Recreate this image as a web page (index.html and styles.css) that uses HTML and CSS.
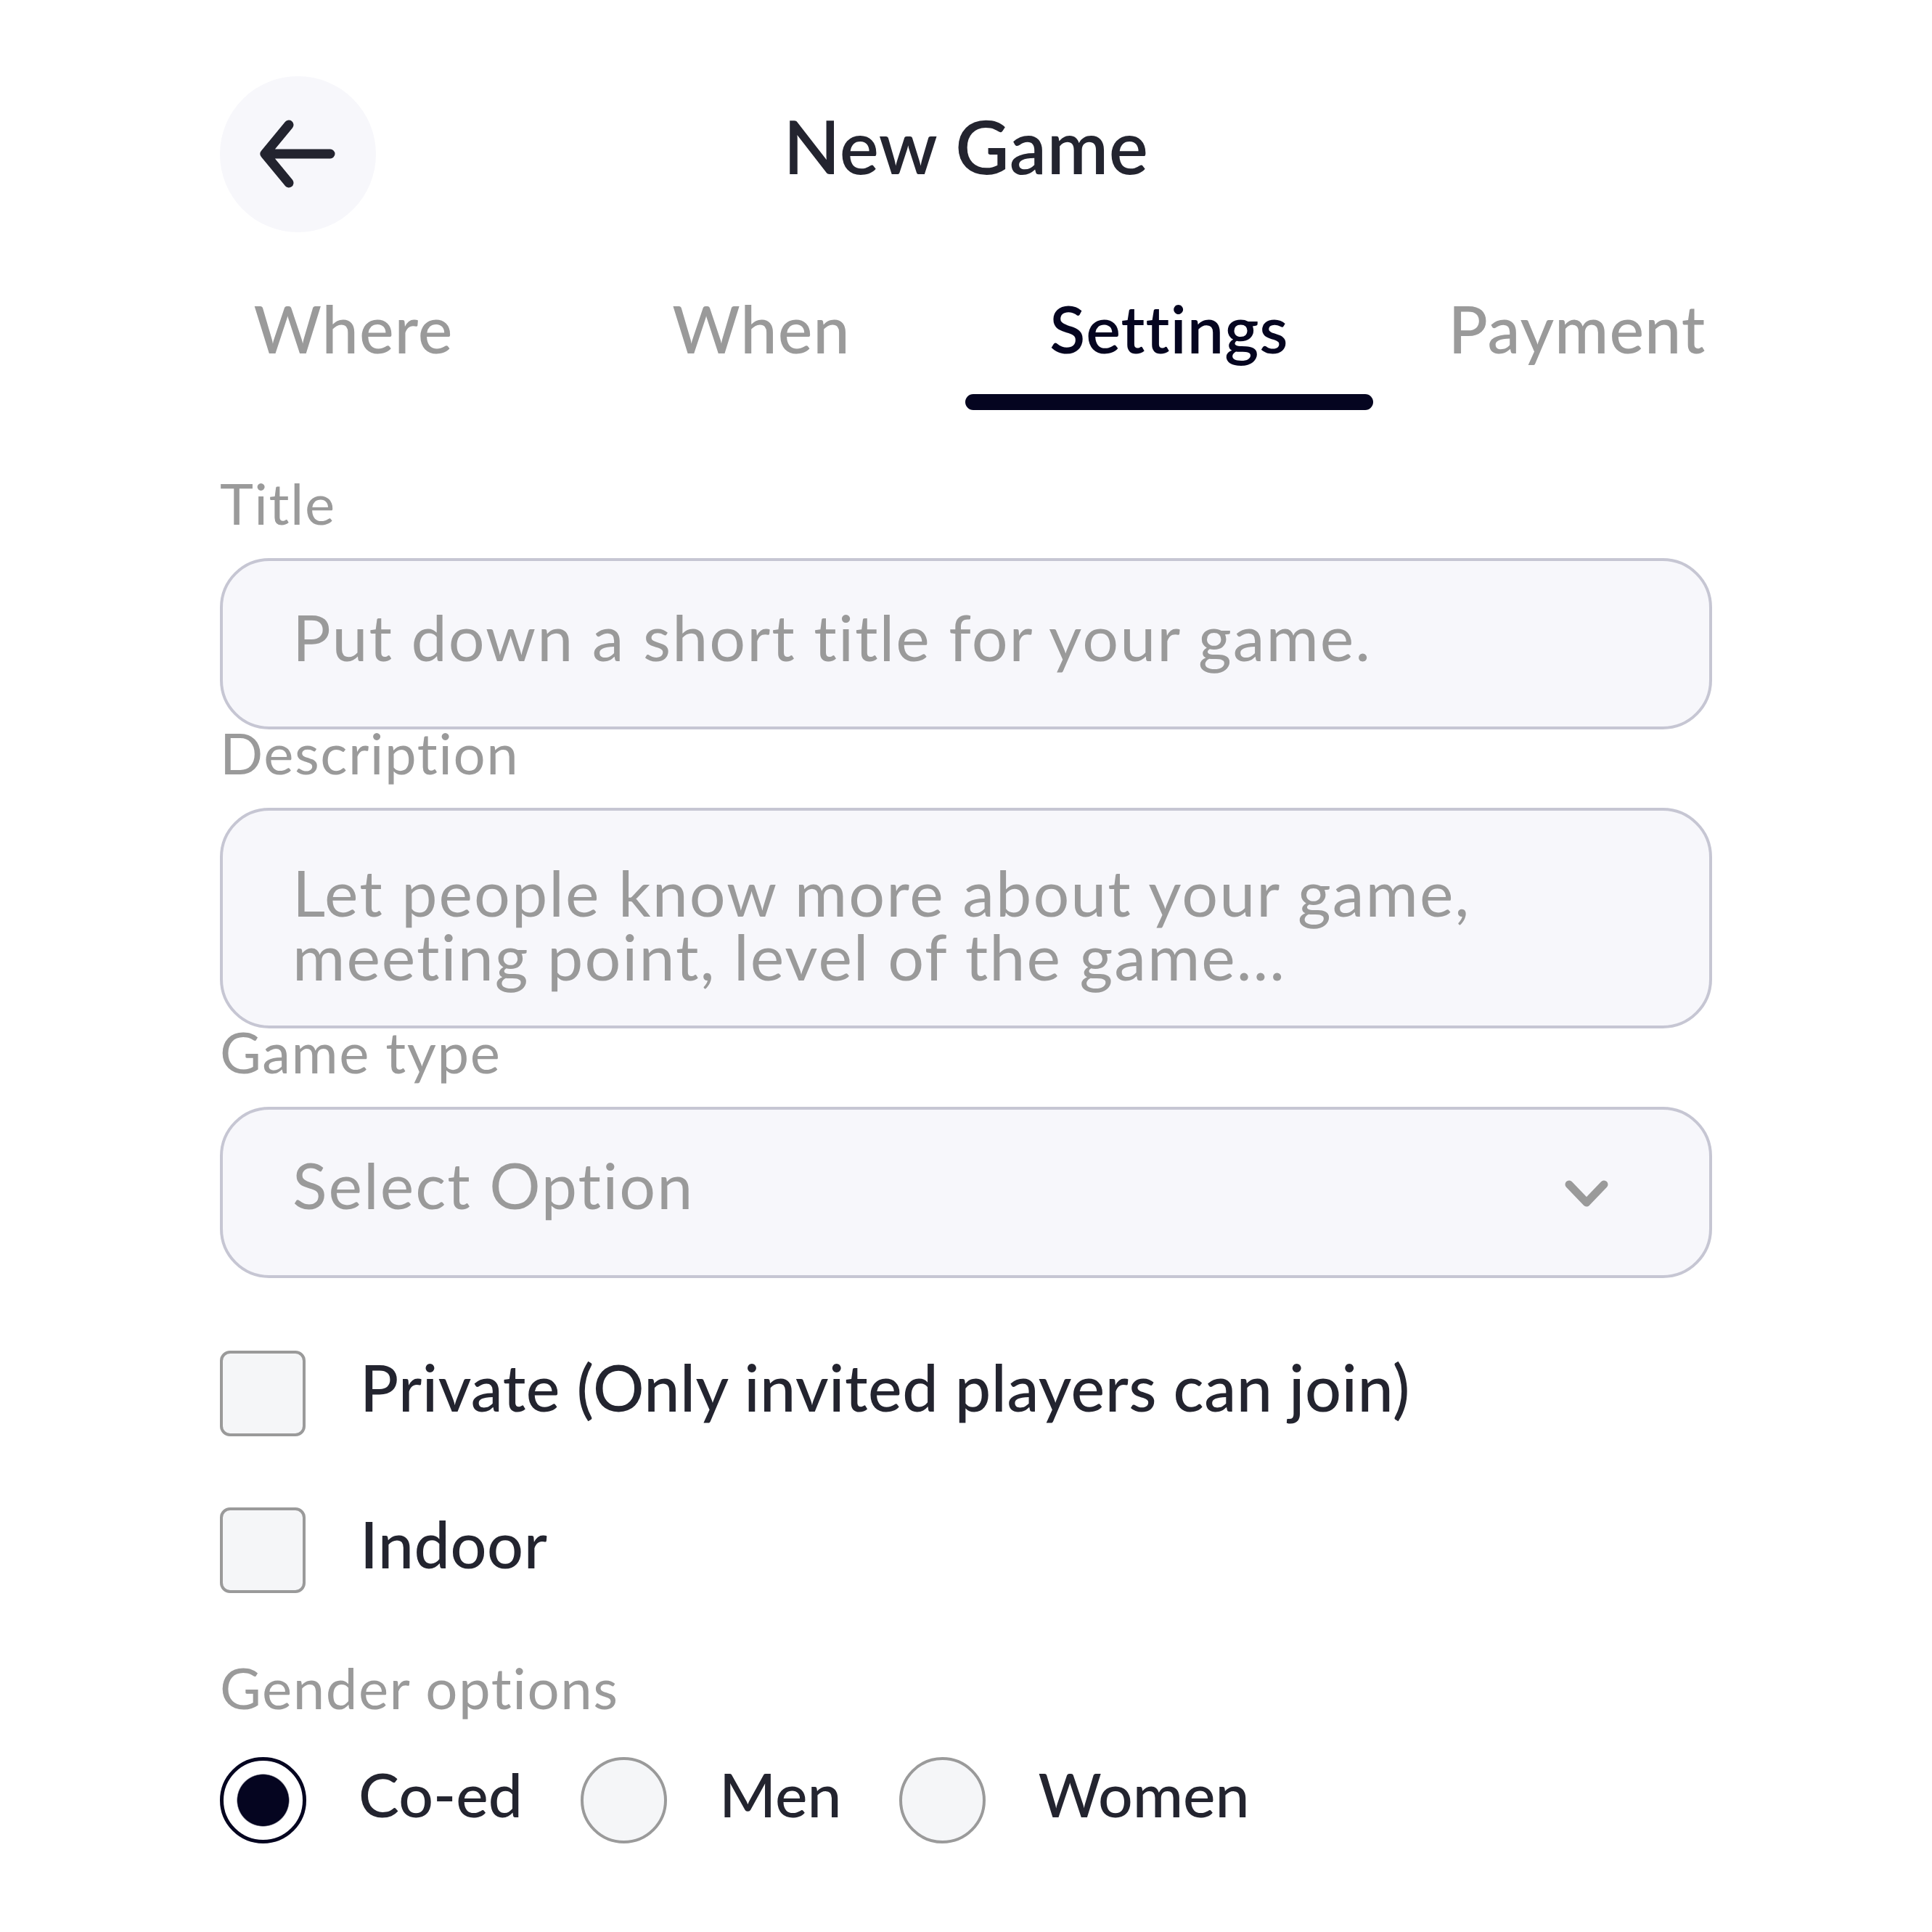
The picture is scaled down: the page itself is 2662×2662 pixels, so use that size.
FILE: index.html
```html
<!DOCTYPE html>
<html lang="en">
<head>
  <meta charset="UTF-8">
  <title>New Game - Settings</title>
  <link rel="stylesheet" href="styles.css">
</head>
<body>
  <div class="screen">
    <header class="topbar">
      <button class="back" type="button" aria-label="Back">
        <svg viewBox="0 0 215 215" width="215" height="215">
          <path d="M152 107 H62 M95 67 L62 107 L95 147" fill="none" stroke="#23242f" stroke-width="13" stroke-linecap="round" stroke-linejoin="round"/>
        </svg>
      </button>
      <h1>New Game</h1>
      <span></span>
    </header>

    <!-- Steps -->
    <nav class="tabs">
      <a class="tab">Where</a>
      <a class="tab">When</a>
      <a class="tab active">Settings</a>
      <a class="tab">Payment</a>
    </nav>

    <form class="settings">
      <label class="label" for="title">Title</label>
      <input class="field" type="text" id="title" placeholder="Put down a short title for your game.">

      <label class="label flush" for="description">Description</label>
      <textarea class="field area" id="description" placeholder="Let people know more about your game,&#10;meeting point, level of the game..."></textarea>

      <label class="label flush">Game type</label>
      <div class="field select">
        <span>Select Option</span>
        <svg viewBox="0 0 60 40" width="60" height="40">
          <path d="M6 6 L30 31 L54 6" fill="none" stroke="#9a9a9a" stroke-width="11" stroke-linecap="round" stroke-linejoin="round"/>
        </svg>
      </div>

      <!-- Toggles -->
      <div class="option first">
        <input class="check" type="checkbox" id="private">
        <label for="private">Private (Only invited players can join)</label>
      </div>
      <div class="option">
        <input class="check" type="checkbox" id="indoor">
        <label for="indoor">Indoor</label>
      </div>

      <label class="label gender">Gender options</label>
      <div class="radios">
        <div class="option">
          <input class="radio" type="radio" name="gender" id="coed" checked>
          <label for="coed">Co-ed</label>
        </div>
        <div class="option">
          <input class="radio" type="radio" name="gender" id="men">
          <label for="men">Men</label>
        </div>
        <div class="option">
          <input class="radio" type="radio" name="gender" id="women">
          <label for="women">Women</label>
        </div>
      </div>
    </form>
  </div>
</body>
</html>
```

FILE: styles.css
```css
body {
  margin: 0;
  background: #fff;
  font-family: Lato, "Open Sans", sans-serif;
  color: #23242f;
}
.screen {
  width: 2056px;
  margin: 0 auto;
  padding-top: 105px;
}
.topbar {
  display: grid;
  grid-template-columns: 215px 1fr 215px;
  align-items: center;
}
.back {
  width: 215px;
  height: 215px;
  padding: 0;
  border: none;
  border-radius: 50%;
  background: #f7f7fb;
  display: flex;
  align-items: center;
  justify-content: center;
}
.topbar h1 {
  margin: 0 0 22px;
  text-align: center;
  font-size: 102px;
  font-weight: 600;
  line-height: 1.2;
  letter-spacing: 0.5px;
  color: #23242f;
}
.tabs {
  display: flex;
  margin: 78px 0 0 -97px;
}
.tab {
  flex: none;
  width: 562px;
  text-align: center;
  font-size: 90px;
  line-height: 108px;
  letter-spacing: 1px;
  color: #9a9a9a;
  font-weight: 500;
}
.tab.active {
  color: #050520;
  font-weight: 600;
}
.tab.active::after {
  content: "";
  display: block;
  height: 22px;
  margin-top: 37px;
  border-radius: 11px;
  background: #050520;
}
.settings {
  padding-top: 96px;
}
.label {
  display: block;
  font-size: 78px;
  line-height: 64px;
  letter-spacing: 1.5px;
  color: #9a9a9a;
  margin-bottom: 44px;
}
.field {
  display: block;
  width: 100%;
  box-sizing: border-box;
  height: 236px;
  margin: 0;
  padding: 0 96px 20px;
  border: 4px solid #c6c6d3;
  border-radius: 68px;
  background: #f7f7fb;
  font-family: inherit;
  font-size: 88px;
  letter-spacing: 2px;
  color: #23242f;
  outline: none;
}
.field::placeholder {
  color: #9a9a9a;
  opacity: 1;
}
.area {
  height: 304px;
  padding-top: 68px;
  padding-bottom: 0;
  line-height: 88px;
  resize: none;
  overflow: hidden;
}
.select {
  display: flex;
  align-items: center;
  justify-content: space-between;
  padding: 0 139px 0 96px;
  color: #9a9a9a;
}
.select span {
  padding-bottom: 20px;
  line-height: 1.2;
}
.select svg {
  margin-top: 6px;
}
.option {
  display: flex;
  align-items: center;
  gap: 75px;
}
.option label {
  font-size: 88px;
  font-weight: 500;
  line-height: 96px;
  letter-spacing: 0.5px;
  padding-bottom: 18px;
  color: #23242f;
}
.option.first {
  margin-top: 100px;
}
.option + .option {
  margin-top: 98px;
}
.check,
.radio {
  -webkit-appearance: none;
  appearance: none;
  flex: none;
  width: 118px;
  height: 118px;
  margin: 0;
  box-sizing: border-box;
  border: 4px solid #9a9a9a;
  background: #f5f6f8;
}
.check {
  border-radius: 14px;
}
.radio {
  width: 119px;
  height: 119px;
  border-radius: 50%;
}
.radio:checked {
  border: 5px solid #050520;
  background: radial-gradient(circle, #050520 35px, #fff 36.5px);
}
.label.gender {
  margin-top: 98px;
  margin-bottom: 64px;
}
.radios {
  display: flex;
  gap: 80px;
}
.radios .option {
  gap: 72px;
}
.radios .option + .option {
  margin-top: 0;
}
.radios .option label {
  font-size: 84px;
  letter-spacing: 0;
}
```
